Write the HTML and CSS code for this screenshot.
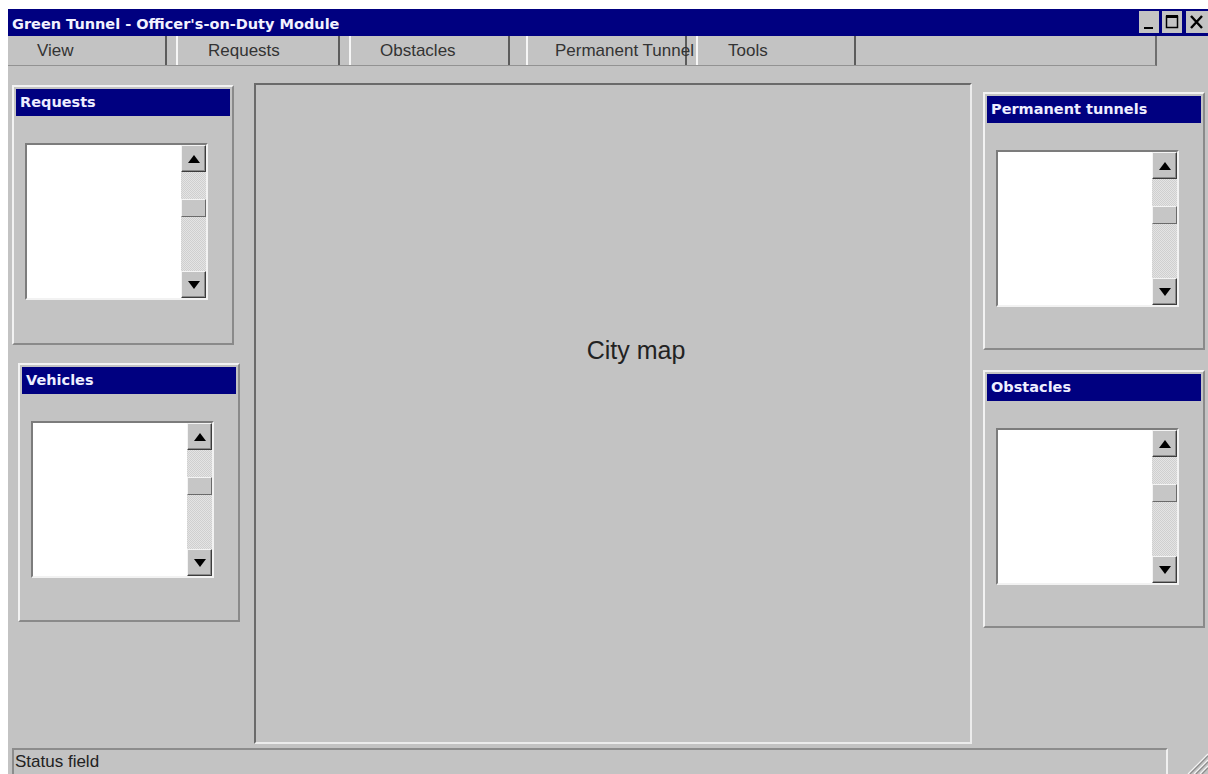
FILE: index.html
```html
<!DOCTYPE html>
<html lang="en">
<head>
<meta charset="utf-8">
<title>Green Tunnel - Officer's-on-Duty Module</title>
<link rel="stylesheet" href="styles.css">
</head>
<body>
<div class="window">
  <header class="titlebar">
    <span class="title">Green Tunnel - Officer's-on-Duty Module</span>
    <div class="caption-buttons">
      <span class="cap-btn">
        <svg width="20" height="22" viewBox="0 0 20 22"><rect x="5" y="16" width="9" height="2" fill="#000"/></svg>
      </span>
      <span class="cap-btn">
        <svg width="20" height="22" viewBox="0 0 20 22"><rect x="4.5" y="5.5" width="11" height="11" fill="none" stroke="#000" stroke-width="1.5"/><rect x="4" y="4" width="12" height="3" fill="#000"/></svg>
      </span>
      <span class="cap-btn cap-close">
        <svg width="22" height="22" viewBox="0 0 22 22"><path d="M5 5 L16 17 M16 5 L5 17" stroke="#000" stroke-width="2.4" fill="none"/></svg>
      </span>
    </div>
  </header>

  <nav class="menubar">
    <div class="menu-item">View</div>
    <div class="menu-item">Requests</div>
    <div class="menu-item">Obstacles</div>
    <div class="menu-item">Permanent Tunnel</div>
    <div class="menu-item">Tools</div>
    <div class="menu-item menu-filler"></div>
  </nav>

  <main class="workspace">
    <div class="column column-left">
      <section class="panel panel-requests">
        <h2 class="panel-title">Requests</h2>
        <div class="listbox">
          <div class="list-area"></div>
          <div class="scrollbar">
            <div class="sb-btn"><svg width="12" height="8" viewBox="0 0 12 8"><polygon points="6,0 12,8 0,8" fill="#000"/></svg></div>
            <div class="sb-track"><div class="sb-thumb"></div></div>
            <div class="sb-btn"><svg width="12" height="8" viewBox="0 0 12 8"><polygon points="0,0 12,0 6,8" fill="#000"/></svg></div>
          </div>
        </div>
      </section>

      <section class="panel panel-vehicles">
        <h2 class="panel-title">Vehicles</h2>
        <div class="listbox">
          <div class="list-area"></div>
          <div class="scrollbar">
            <div class="sb-btn"><svg width="12" height="8" viewBox="0 0 12 8"><polygon points="6,0 12,8 0,8" fill="#000"/></svg></div>
            <div class="sb-track"><div class="sb-thumb"></div></div>
            <div class="sb-btn"><svg width="12" height="8" viewBox="0 0 12 8"><polygon points="0,0 12,0 6,8" fill="#000"/></svg></div>
          </div>
        </div>
      </section>
    </div>

    <div class="map">
      <span class="map-label">City map</span>
    </div>

    <div class="column column-right">
      <section class="panel">
        <h2 class="panel-title">Permanent tunnels</h2>
        <div class="listbox">
          <div class="list-area"></div>
          <div class="scrollbar">
            <div class="sb-btn"><svg width="12" height="8" viewBox="0 0 12 8"><polygon points="6,0 12,8 0,8" fill="#000"/></svg></div>
            <div class="sb-track"><div class="sb-thumb"></div></div>
            <div class="sb-btn"><svg width="12" height="8" viewBox="0 0 12 8"><polygon points="0,0 12,0 6,8" fill="#000"/></svg></div>
          </div>
        </div>
      </section>

      <section class="panel panel-obstacles">
        <h2 class="panel-title">Obstacles</h2>
        <div class="listbox">
          <div class="list-area"></div>
          <div class="scrollbar">
            <div class="sb-btn"><svg width="12" height="8" viewBox="0 0 12 8"><polygon points="6,0 12,8 0,8" fill="#000"/></svg></div>
            <div class="sb-track"><div class="sb-thumb"></div></div>
            <div class="sb-btn"><svg width="12" height="8" viewBox="0 0 12 8"><polygon points="0,0 12,0 6,8" fill="#000"/></svg></div>
          </div>
        </div>
      </section>
    </div>
  </main>

  <footer class="statusrow">
    <div class="status-field">Status field</div>
    <svg class="grip" width="23" height="24" viewBox="0 0 23 24">
      <path d="M23 4 L3 24 M23 10 L9 24 M23 16 L15 24" stroke="#f4f4f4" stroke-width="1.2"/>
      <path d="M23 6 L5 24 M23 12 L11 24 M23 18 L17 24" stroke="#8c8c8c" stroke-width="1.2"/>
    </svg>
  </footer>
</div>
</body>
</html>
```

FILE: styles.css
```css
html, body {
  margin: 0;
  padding: 0;
  overflow: hidden;
  background: #ffffff;
}

body {
  padding: 9px 0 0 8px;
  font-family: "Liberation Sans", Arial, sans-serif;
  color: #2a2a2a;
}

.window {
  width: 1200px;
  height: 765px;
  background: #c3c3c3;
  display: flex;
  flex-direction: column;
}

/* ---------- title bar ---------- */
.titlebar {
  height: 27px;
  background: #000080;
  display: flex;
  justify-content: space-between;
  align-items: flex-start;
  flex-shrink: 0;
}

.title {
  font-family: "DejaVu Sans", sans-serif;
  font-weight: bold;
  font-size: 14.5px;
  line-height: 24px;
  padding: 3px 0 0 4px;
  color: #f2f2ff;
  white-space: nowrap;
}

.caption-buttons {
  display: flex;
  gap: 3px;
  padding-top: 2px;
}

.cap-btn {
  width: 20px;
  height: 22px;
  background: #c3c3c3;
  display: block;
}

.cap-btn svg {
  display: block;
}

.cap-close {
  width: 22px;
  margin-left: 1px;
}

/* ---------- menu bar ---------- */
.menubar {
  width: 1149px;
  height: 30px;
  box-sizing: border-box;
  border-bottom: 1px solid #929292;
  border-right: 2px solid #6e6e6e;
  display: flex;
  flex-shrink: 0;
  font-size: 17px;
  line-height: 29px;
  color: #333333;
}

.menu-item {
  box-sizing: border-box;
  padding-left: 29px;
  white-space: nowrap;
  border-right: 2px solid #5c5c5c;
  border-left: 2px solid #f6f6f6;
  margin-left: 9px;
}

.menu-item:nth-child(1) { width: 159px; border-left: 0; margin-left: 0; }
.menu-item:nth-child(2) { width: 164px; padding-left: 30px; }
.menu-item:nth-child(3) { width: 161px; }
.menu-item:nth-child(4) { width: 161px; margin-left: 16px; padding-left: 27px; }
.menu-item:nth-child(5) { width: 160px; padding-left: 30px; }
.menu-filler {
  flex: 1;
  border-left: 0;
  border-right: 0;
  margin-left: 0;
}

/* ---------- workspace ---------- */
.workspace {
  height: 682px;
  flex-shrink: 0;
  display: flex;
  align-items: flex-start;
  padding-left: 4px;
}

.column {
  display: flex;
  flex-direction: column;
}

.column-left {
  width: 228px;
  margin-top: 19px;
  gap: 18px;
}

.column-right {
  width: 222px;
  margin-left: 11px;
  margin-top: 26px;
  gap: 20px;
}

.map {
  width: 718px;
  height: 661px;
  box-sizing: border-box;
  margin-left: 14px;
  margin-top: 17px;
  border-top: 2px solid #6a6a6a;
  border-left: 2px solid #6a6a6a;
  border-right: 2px solid #ececec;
  border-bottom: 2px solid #ececec;
  padding: 250px 0 0 46px;
  text-align: center;
}

.map-label {
  font-size: 25px;
  line-height: 30px;
  color: #222222;
}

/* ---------- panels ---------- */
.panel {
  width: 222px;
  height: 258px;
  box-sizing: border-box;
  border-top: 2px solid #f2f2f2;
  border-left: 2px solid #f2f2f2;
  border-right: 2px solid #8a8a8a;
  border-bottom: 2px solid #8a8a8a;
  padding: 2px;
}

.panel-requests { height: 260px; }
.panel-vehicles { height: 259px; margin-left: 6px; }

.panel-title {
  margin: 0;
  height: 27px;
  background: #000080;
  color: #eeeeff;
  font-family: "DejaVu Sans", sans-serif;
  font-weight: bold;
  font-size: 14.5px;
  line-height: 26px;
  padding-left: 4px;
}

.listbox {
  width: 183px;
  height: 157px;
  box-sizing: border-box;
  margin: 27px 0 0 9px;
  border-top: 2px solid #7c7c7c;
  border-left: 2px solid #7c7c7c;
  border-right: 2px solid #f2f2f2;
  border-bottom: 2px solid #f2f2f2;
  display: flex;
}

.list-area {
  flex: 1;
  background: #ffffff;
}

.scrollbar {
  width: 25px;
  display: flex;
  flex-direction: column;
}

.sb-btn {
  height: 27px;
  box-sizing: border-box;
  background: #c3c3c3;
  border-top: 1px solid #f4f4f4;
  border-left: 1px solid #f4f4f4;
  border-right: 1px solid #3c3c3c;
  border-bottom: 1px solid #3c3c3c;
  box-shadow: inset -1px -1px 0 #8a8a8a;
  display: flex;
  align-items: center;
  justify-content: center;
  flex-shrink: 0;
}

.sb-btn svg {
  display: block;
}

.sb-track {
  flex: 1;
  background: repeating-conic-gradient(#cfcfcf 0 25%, #e4e4e4 0 50%) 0 0 / 2px 2px;
  padding-top: 27px;
}

.sb-thumb {
  height: 18px;
  box-sizing: border-box;
  background: #c6c6c6;
  border-top: 1px solid #f4f4f4;
  border-left: 1px solid #f4f4f4;
  border-right: 1px solid #6a6a6a;
  border-bottom: 1px solid #6a6a6a;
}

/* ---------- status bar ---------- */
.statusrow {
  height: 26px;
  flex-shrink: 0;
  display: flex;
  align-items: flex-start;
  padding-left: 4px;
}

.status-field {
  width: 1156px;
  height: 26px;
  box-sizing: border-box;
  border-top: 2px solid #8c8c8c;
  border-left: 2px solid #8c8c8c;
  border-right: 2px solid #f0f0f0;
  padding-left: 1px;
  font-size: 17px;
  line-height: 24px;
  color: #222222;
}

.grip {
  display: block;
  margin-left: auto;
  margin-top: 2px;
}
```
